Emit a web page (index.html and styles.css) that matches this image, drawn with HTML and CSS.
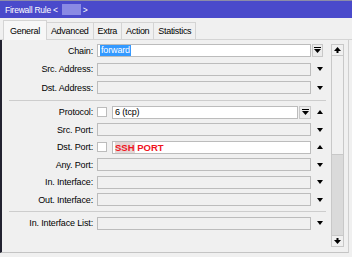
FILE: index.html
```html
<!DOCTYPE html>
<html lang="en">
  <head>
    <meta charset="UTF-8" />
    <title>Firewall Rule</title>
    <link rel="stylesheet" href="styles.css">
  </head>
  <body>
    <div class="titlebar">
      <span>Firewall Rule &lt;</span><span class="redact"></span><span>&gt;</span>
    </div>
    <div class="tabs">
      <div class="tab active">General</div>
      <div class="tab">Advanced</div>
      <div class="tab">Extra</div>
      <div class="tab">Action</div>
      <div class="tab">Statistics</div>
    </div>
    <div class="panel">
      <div class="form">
        <div class="group first">
          <div class="row">
            <label>Chain:</label>
            <div class="field white"><span class="sel">forward</span></div>
            <div class="side">
              <span class="btn"><svg width="7" height="7" viewBox="0 0 7 7"><rect x="0" y="0" width="7" height="1" fill="#000"/><polygon points="0,2 7,2 3.5,6" fill="#000"/></svg></span>
            </div>
          </div>
          <div class="row">
            <label>Src. Address:</label>
            <div class="field"></div>
            <div class="side"><span class="down"></span></div>
          </div>
          <div class="row">
            <label>Dst. Address:</label>
            <div class="field"></div>
            <div class="side"><span class="down"></span></div>
          </div>
        </div>
        <div class="sep"></div>
        <div class="group">
          <div class="row">
            <label>Protocol:</label>
            <span class="check"></span>
            <div class="field white">6 (tcp)</div>
            <span class="btn small"><svg width="7" height="7" viewBox="0 0 7 7"><rect x="0" y="0" width="7" height="1" fill="#000"/><polygon points="0,2 7,2 3.5,6" fill="#000"/></svg></span>
            <div class="side"><span class="up"></span></div>
          </div>
          <div class="row">
            <label>Src. Port:</label>
            <div class="field"></div>
            <div class="side"><span class="down"></span></div>
          </div>
          <div class="row">
            <label>Dst. Port:</label>
            <span class="check"></span>
            <div class="field white"><span class="red"><span class="mark">SSH</span> PORT</span></div>
            <div class="side"><span class="up"></span></div>
          </div>
          <div class="row">
            <label>Any. Port:</label>
            <div class="field"></div>
            <div class="side"><span class="down"></span></div>
          </div>
          <div class="row">
            <label>In. Interface:</label>
            <div class="field"></div>
            <div class="side"><span class="down"></span></div>
          </div>
          <div class="row">
            <label>Out. Interface:</label>
            <div class="field"></div>
            <div class="side"><span class="down"></span></div>
          </div>
        </div>
        <div class="sep"></div>
        <div class="group">
          <div class="row">
            <label>In. Interface List:</label>
            <div class="field"></div>
            <div class="side"><span class="down"></span></div>
          </div>
        </div>
      </div>
      <div class="scroll">
        <div class="sbtn"><svg width="7" height="6" viewBox="0 0 7 6"><polygon points="3.5,0 7,4 0,4" fill="#000"/><rect x="2.5" y="4" width="2" height="2" fill="#000"/></svg></div>
        <div class="thumb"></div>
        <div class="track"></div>
        <div class="sbtn"><svg width="7" height="6" viewBox="0 0 7 6"><rect x="2.5" y="0" width="2" height="2" fill="#000"/><polygon points="0,2 7,2 3.5,6" fill="#000"/></svg></div>
      </div>
    </div>
  </body>
</html>
```

FILE: styles.css
```css
body {
  margin: 0;
  width: 352px;
  height: 257px;
  overflow: hidden;
  background-color: #f0f0f0;
  font-family: "Liberation Sans", Arial, sans-serif;
  font-size: 9px;
  letter-spacing: -0.15px;
  color: #000;
}

.titlebar {
  height: 17px;
  border-top: 1px solid #8c8ca8;
  background-color: #4a4acb;
  color: #fff;
  display: flex;
  align-items: center;
  padding-left: 5px;
  font-size: 8.5px;
  letter-spacing: -0.25px;
}

.redact {
  display: inline-block;
  width: 19px;
  height: 11px;
  margin: 0 2px 0 4px;
  background-color: #8a8ae4;
}

.tabs {
  height: 22px;
  display: flex;
  align-items: flex-end;
  padding-left: 3px;
  border-bottom: 1px solid #d4d4d4;
  box-sizing: border-box;
}

.tab {
  height: 17px;
  padding: 0 4px;
  display: flex;
  align-items: center;
  border: 1px solid #d4d4d4;
  border-bottom: none;
  margin-right: -1px;
  background-color: #f0f0f0;
  box-sizing: border-box;
  letter-spacing: -0.3px;
}

.tab.active {
  height: 20px;
  padding: 0 6px;
  background-color: #f7f7f7;
  margin-bottom: -1px;
}

.panel {
  display: flex;
  height: 213px;
  width: 349px;
  box-sizing: border-box;
  border-left: 2px solid #222230;
  border-right: 1px solid #cfcfcf;
  border-bottom: 1px solid #c4c4c4;
}

.form {
  width: 325px;
  padding-top: 4px;
}

.group .row {
  margin-bottom: 4.5px;
}

.group.first .row {
  margin-bottom: 5.5px;
}

.row {
  display: flex;
  align-items: center;
  height: 13px;
}

.row label {
  width: 91px;
  text-align: right;
  white-space: nowrap;
  margin-right: 4px;
}

.field {
  flex: 1;
  height: 13px;
  box-sizing: border-box;
  border: 1px solid #bcbcbc;
  background-color: #f0f0f0;
  display: flex;
  align-items: center;
  padding-left: 2px;
}

.field.white {
  background-color: #fff;
}

.sel {
  background-color: #3399ff;
  color: #fff;
  padding: 0 1px;
  line-height: 11px;
}

.red {
  color: #f0141e;
  font-weight: bold;
  font-size: 9.5px;
  letter-spacing: 0;
}

.mark {
  background-color: #e4d6d6;
}

.check {
  width: 10px;
  height: 10px;
  box-sizing: border-box;
  border: 1px solid #bcbcbc;
  background-color: #fff;
  margin-right: 5px;
}

.side {
  width: 16px;
  display: flex;
  align-items: center;
  justify-content: center;
}

.btn {
  width: 11px;
  height: 13px;
  box-sizing: border-box;
  border: 1px solid #c8c8c8;
  background-color: #ececec;
  display: flex;
  align-items: center;
  justify-content: center;
}

.side .btn {
  margin-right: 3px;
}

.btn.small {
  width: 12px;
  margin-left: 1px;
}

.down,
.up {
  width: 0;
  height: 0;
  border-left: 3.5px solid transparent;
  border-right: 3.5px solid transparent;
  margin-left: 2px;
}

.down {
  border-top: 4px solid #000;
}

.up {
  border-bottom: 4px solid #000;
}

.sep {
  height: 1px;
  margin: 2px 0 5px 7px;
  width: 317px;
  background-color: #cdcdcd;
}

.scroll {
  width: 13px;
  height: 203px;
  margin: 4px 0 0 4px;
  display: flex;
  flex-direction: column;
  border: 1px solid #c8c8c8;
  box-sizing: border-box;
}

.sbtn {
  height: 10px;
  display: flex;
  align-items: center;
  justify-content: center;
  background-color: #f0f0f0;
}

.thumb {
  height: 100px;
  box-sizing: border-box;
  border-top: 1px solid #c8c8c8;
  border-bottom: 1px solid #c8c8c8;
  background-color: #f0f0f0;
}

.track {
  flex: 1;
  background-color: #dadada;
  border-bottom: 1px solid #c8c8c8;
}
```
